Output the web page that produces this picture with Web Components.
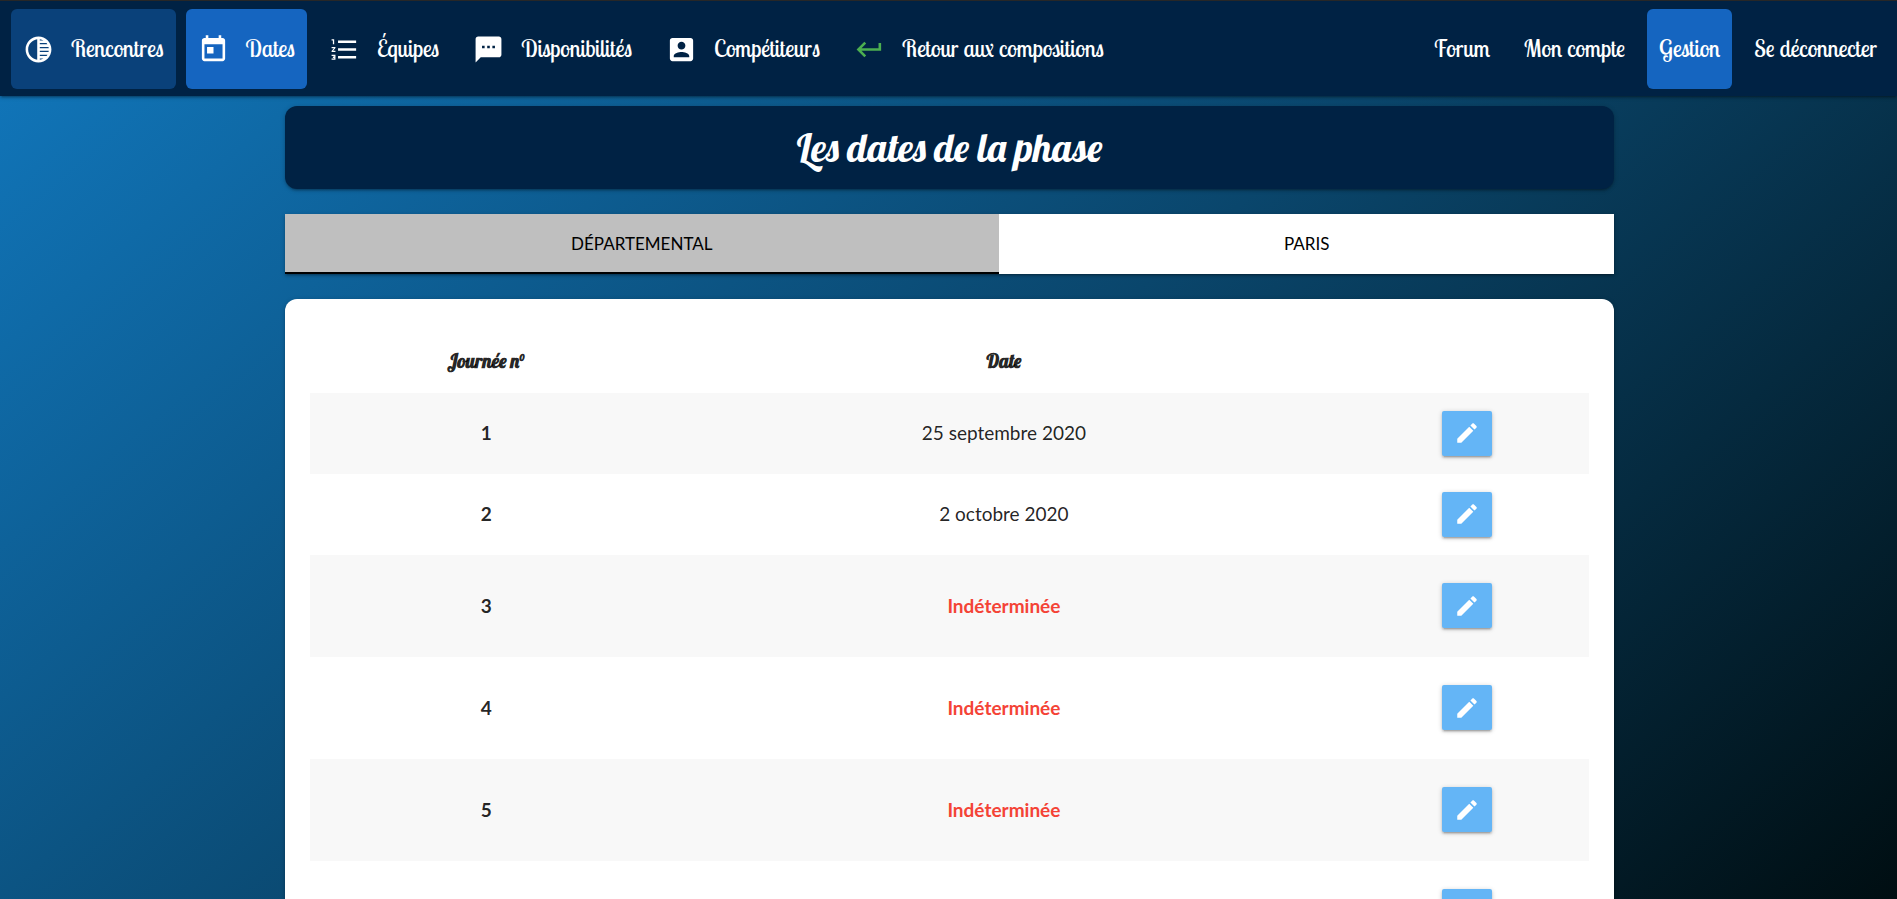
<!DOCTYPE html>
<html lang="fr">
<head>
<meta charset="utf-8">
<meta name="viewport" content="width=device-width, initial-scale=1">
<title>Les dates de la phase</title>
<style>
:root{--navy:#002244;--display:Lobster,"Liberation Serif",serif;--menu:"Lobster Two","Liberation Serif",serif;--shadow:0 2px 2px 0 rgba(0,0,0,.14),0 3px 1px -2px rgba(0,0,0,.12),0 1px 5px 0 rgba(0,0,0,.2)}
html{min-height:100%;background:linear-gradient(140deg,#1178be 0%,#0a466c 50%,#000e12 100%) fixed}
body{margin:0;font:400 19px/24px Lato,sans-serif;color:rgba(0,0,0,.87)}
main{width:calc(70% + 2px);margin:0 auto 0 15%;padding:10px 0 25px;display:flex;flex-direction:column;gap:25px}
</style>
</head>
<body>
<app-bar>
  <nav-item icon="tonality" tone="dim">Rencontres</nav-item>
  <nav-item icon="today" tone="active">Dates</nav-item>
  <nav-item icon="list">Équipes</nav-item>
  <nav-item icon="sms">Disponibilités</nav-item>
  <nav-item icon="person">Compétiteurs</nav-item>
  <nav-item icon="back">Retour aux compositions</nav-item>
  <nav-item slot="end">Forum</nav-item>
  <nav-item slot="end">Mon compte</nav-item>
  <nav-item slot="end" tone="active">Gestion</nav-item>
  <nav-item slot="end">Se déconnecter</nav-item>
</app-bar>
<main>
  <page-title>Les dates de la phase</page-title>
  <tab-bar></tab-bar>
  <dates-card></dates-card>
</main>
<script>
const ICONS={
tonality:'<path d="M12 2C6.480 2 2 6.480 2 12s4.480 10 10 10 10-4.480 10-10S17.520 2 12 2zm-1 17.930c-3.940-.490-7-3.850-7-7.930s3.050-7.440 7-7.930v15.860zm2-15.860c1.030.130 2 .450 2.870.930H13v-.930zM13 7h5.240c.250.310.480.650.680 1H13V7zm0 3h6.740c.080.330.150.660.190 1H13v-1zm0 9.930V19h2.870c-.870.480-1.840.800-2.870.930zM18.240 17H13v-1h5.920c-.200.350-.430.690-.680 1zm1.500-3H13v-1h6.930c-.040.340-.110.670-.190 1z"/>',
today:'<path d="M19 3h-1V1h-2v2H8V1H6v2H5c-1.11 0-1.99.9-1.99 2L3 19c0 1.1.89 2 2 2h14c1.1 0 2-.9 2-2V5c0-1.1-.9-2-2-2zm0 16H5V8h14v11zM7 10h5v5H7z"/>',
list:'<path d="M2 17h2v.5H3v1h1v.5H2v1h3v-4H2v1zm1-9h1V4H2v1h1v3zm-1 3h1.8L2 13.1v.9h3v-1H3.2L5 10.9V10H2v1zm5-6v2h14V5H7zm0 14h14v-2H7v2zm0-6h14v-2H7v2z"/>',
sms:'<path d="M20 2H4c-1.1 0-1.99.9-1.99 2L2 22l4-4h14c1.1 0 2-.9 2-2V4c0-1.1-.9-2-2-2zM9 11H7V9h2v2zm4 0h-2V9h2v2zm4 0h-2V9h2v2z"/>',
person:'<path d="M3 5v14c0 1.1.89 2 2 2h14c1.1 0 2-.9 2-2V5c0-1.1-.9-2-2-2H5c-1.11 0-2 .9-2 2zm12 4c0 1.66-1.34 3-3 3s-3-1.34-3-3 1.34-3 3-3 3 1.34 3 3zm-9 8c0-2 4-3.100 6-3.100s6 1.100 6 3.100v1H6v-1z"/>',
back:'<path d="M19 7v4H5.830l3.580-3.590L8 6l-6 6 6 6 1.410-1.410L5.830 13H21V7z" fill="#4caf50"/>',
edit:'<path d="M3 17.250V21h3.750L17.810 9.940l-3.750-3.750L3 17.250zM20.710 7.040c.39-.39.39-1.020 0-1.410l-2.340-2.340c-.39-.39-1.020-.39-1.410 0l-1.830 1.830 3.750 3.750 1.830-1.830z"/>'};
const svg=n=>`<svg viewBox="0 0 24 24" fill="currentColor" aria-hidden="true">${ICONS[n]}</svg>`;
function define(name,render){
  customElements.define(name,class extends HTMLElement{
    constructor(){super();this.attachShadow({mode:'open'})}
    connectedCallback(){this.shadowRoot.innerHTML=render(this)}
  });
}
define('nav-item',el=>{const i=el.getAttribute('icon');return `<style>
:host{display:block}
a{display:flex;align-items:center;gap:17px;height:80px;padding:0 12px;border-radius:6px;color:#fff;text-decoration:none;white-space:nowrap;font:400 23px/30px var(--menu)}
:host([tone=dim]) a{background:#0a417a}
:host([tone=active]) a{background:#1565c0}
svg{width:31px;height:31px;flex:none}
</style><a href="#">${i?svg(i):''}<span><slot></slot></span></a>`});
define('app-bar',()=>`<style>
:host{display:block;position:relative;background:var(--navy);border-top:1px solid #272727;box-shadow:var(--shadow)}
nav{display:flex;justify-content:space-between;padding:8px 8px 7px 11px}
div{display:flex;gap:10px}
</style><nav><div><slot></slot></div><div><slot name="end"></slot></div></nav>`);
define('page-title',()=>`<style>
:host{display:block;background:var(--navy);border-radius:12px;box-shadow:var(--shadow)}
h1{margin:0;padding:16px;text-align:center;color:#fff;font:400 39px/51px var(--display)}
</style><h1><slot></slot></h1>`);
define('tab-bar',()=>`<style>
:host{display:grid;grid-template-columns:714fr 615fr;background:#fff;box-shadow:var(--shadow)}
button{height:60px;margin:0;padding:2px 24px 0;border:0;border-bottom:2px solid transparent;background:#fff;color:#000;font:400 17px/30px Lato,sans-serif;text-transform:uppercase}
.on{background:#bfbfbf;border-bottom-color:#000}
</style><button class="on" type="button">Départemental</button><button type="button">Paris</button>`);
define('dates-card',()=>{
const rows=['25 septembre 2020','2 octobre 2020','','','','',''];
return `<style>
:host{display:block;background:#fff;border-radius:12px;padding:25px;box-shadow:var(--shadow)}
table{width:100%;border-collapse:collapse;table-layout:fixed;text-align:center}
.n{width:27.6%}.a{width:19.1%}
th,td{padding:0 0 1px}
thead tr{height:69px}
thead th{font:700 19px/30px var(--display);padding-top:5px}
tbody tr{height:81px}
tbody tr.unset{height:102px}
tbody tr:nth-child(odd){background:#f8f8f8}
tbody th{font-weight:700}
.unset td{color:#f44336;font-weight:700}
button{display:inline-flex;align-items:center;justify-content:center;vertical-align:middle;width:50px;height:45px;padding:0;border:0;border-radius:2px;background:#64b5f6;color:#fff;box-shadow:var(--shadow)}
svg{width:26px;height:26px}
</style><table><colgroup><col class="n"><col><col class="a"></colgroup>
<thead><tr><th scope="col">Journée n°</th><th scope="col">Date</th><td></td></tr></thead>
<tbody>${rows.map((d,i)=>`<tr${d?'':' class="unset"'}><th scope="row">${i+1}</th><td>${d||'Indéterminée'}</td><td><button type="button" aria-label="Modifier la journée ${i+1}">${svg('edit')}</button></td></tr>`).join('')}</tbody></table>`});
</script>
</body>
</html>
